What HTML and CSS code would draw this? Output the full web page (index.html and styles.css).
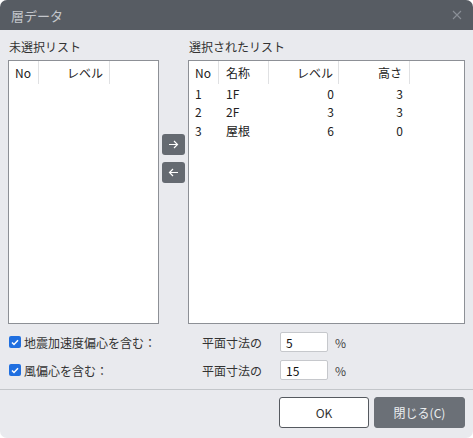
FILE: index.html
```html
<!DOCTYPE html>
<html lang="ja">
<head>
<meta charset="utf-8">
<link rel="stylesheet" href="styles.css">
</head>
<body>
<div class="window">
  <div class="titlebar">
    <span class="title">層データ</span>
    <svg class="close" width="10" height="10" viewBox="0 0 10 10"><path d="M1 1 L9 9 M9 1 L1 9" stroke="#8a8f96" stroke-width="1.1" fill="none"/></svg>
  </div>
  <div class="content">
    <div class="lists">
      <div class="panel left">
        <div class="plabel">未選択リスト</div>
        <div class="box">
          <div class="row head">
            <div class="c c-no">No</div>
            <div class="c c-lvl-l r">レベル</div>
          </div>
        </div>
      </div>
      <div class="mid">
        <button class="abtn"><svg width="11" height="9" viewBox="0 0 11 9"><path d="M1 4.5 H9.5 M6 1 L9.5 4.5 L6 8" stroke="#fff" stroke-width="1.2" fill="none"/></svg></button>
        <button class="abtn"><svg width="11" height="9" viewBox="0 0 11 9"><path d="M10 4.5 H1.5 M5 1 L1.5 4.5 L5 8" stroke="#fff" stroke-width="1.2" fill="none"/></svg></button>
      </div>
      <div class="panel right">
        <div class="plabel">選択されたリスト</div>
        <div class="box">
          <div class="row head">
            <div class="c c-no">No</div>
            <div class="c c-name">名称</div>
            <div class="c c-lvl r">レベル</div>
            <div class="c c-h r">高さ</div>
          </div>
          <div class="row data">
            <div class="c c-no">1</div>
            <div class="c c-name">1F</div>
            <div class="c c-lvl r">0</div>
            <div class="c c-h r">3</div>
          </div>
          <div class="row data">
            <div class="c c-no">2</div>
            <div class="c c-name">2F</div>
            <div class="c c-lvl r">3</div>
            <div class="c c-h r">3</div>
          </div>
          <div class="row data">
            <div class="c c-no">3</div>
            <div class="c c-name">屋根</div>
            <div class="c c-lvl r">6</div>
            <div class="c c-h r">0</div>
          </div>
        </div>
      </div>
    </div>
    <div class="opts">
      <div class="opt">
        <span class="cb"><svg width="8" height="7" viewBox="0 0 8 7"><path d="M1 3.5 L3 5.5 L7 1.2" stroke="#fff" stroke-width="1.5" fill="none"/></svg></span>
        <span class="olabel">地震加速度偏心を含む：</span>
        <span class="dim">平面寸法の</span>
        <span class="inp">5</span>
        <span class="pct">%</span>
      </div>
      <div class="opt">
        <span class="cb"><svg width="8" height="7" viewBox="0 0 8 7"><path d="M1 3.5 L3 5.5 L7 1.2" stroke="#fff" stroke-width="1.5" fill="none"/></svg></span>
        <span class="olabel">風偏心を含む：</span>
        <span class="dim">平面寸法の</span>
        <span class="inp">15</span>
        <span class="pct">%</span>
      </div>
    </div>
  </div>
  <div class="sep"></div>
  <div class="footer">
    <button class="btn ok">OK</button>
    <button class="btn close-btn">閉じる(C)</button>
  </div>
</div>
</body>
</html>
```
FILE: styles.css
```css
html, body {
  margin: 0;
  padding: 0;
  background: #ffffff;
}
body {
  font-family: "Noto Sans CJK JP", "Noto Sans", sans-serif;
  font-size: 12px;
  color: #333;
}
.window {
  width: 473px;
  height: 438px;
  background: #e9eaee;
  border-radius: 7px;
  overflow: hidden;
  display: flex;
  flex-direction: column;
}
.titlebar {
  height: 30px;
  flex: none;
  background: #575c63;
  display: flex;
  align-items: center;
  justify-content: space-between;
  padding: 0 11px 0 11px;
  box-sizing: border-box;
}
.title {
  color: #c3c6cb;
  font-size: 13px;
}
.close {
  display: block;
  margin-top: -1px;
}
.content {
  padding: 10px 8px 0 8px;
}
.lists {
  display: flex;
}
.panel {
  display: flex;
  flex-direction: column;
}
.panel.left { width: 151px; }
.panel.right { width: 277px; }
.plabel {
  height: 14px;
  line-height: 14px;
  margin-bottom: 6px;
  padding-left: 1px;
  color: #333;
}
.box {
  height: 262px;
  background: #fff;
  border: 1px solid #8d9096;
}
.mid {
  width: 29px;
  display: flex;
  flex-direction: column;
  align-items: center;
  padding-top: 94px;
  gap: 7px;
}
.abtn {
  width: 23px;
  height: 21px;
  border: none;
  border-radius: 3px;
  background: #656a71;
  padding: 0;
  display: flex;
  align-items: center;
  justify-content: center;
}
.row {
  display: flex;
}
.row.head {
  height: 23px;
  align-items: center;
}
.row.data {
  height: 18.5px;
  align-items: center;
  color: #222;
}
.row.data:first-of-type { }
.c {
  box-sizing: border-box;
  padding: 0 6px 0 7px;
  height: 100%;
  display: flex;
  align-items: center;
  white-space: nowrap;
}
.head .c {
  border-right: 1px solid #e0e1e3;
  color: #222;
}
.c.r { justify-content: flex-end; }
.c-no { width: 30px; padding-left: 6px; }
.left .c-no { width: 30px; }
.c-lvl-l { width: 71px; }
.c-name { width: 50px; }
.c-lvl { width: 70px; padding-right: 5px; }
.c-h { width: 71px; padding-right: 7px; }
.opts {
  display: flex;
  flex-direction: column;
  gap: 8px;
  margin-top: 8px;
}
.opt {
  height: 20px;
  display: flex;
  align-items: center;
}
.cb {
  width: 12px;
  height: 12px;
  border-radius: 2px;
  background: #1f6fe0;
  display: flex;
  align-items: center;
  justify-content: center;
  margin-left: 1px;
  flex: none;
}
.olabel {
  margin-left: 3px;
  width: 178px;
  color: #333;
}
.dim {
  width: 78px;
  color: #333;
}
.inp {
  width: 48px;
  height: 20px;
  box-sizing: border-box;
  border: 1px solid #c6c8cc;
  border-radius: 2px;
  background: #fff;
  padding-left: 5px;
  display: flex;
  align-items: center;
  color: #111;
}
.pct {
  margin-left: 7px;
  color: #444;
}
.sep {
  height: 1px;
  background: #c3c6ca;
  margin-top: 9px;
}
.footer {
  display: flex;
  justify-content: flex-end;
  gap: 5px;
  padding: 7px 8px 0 0;
}
.btn {
  width: 90px;
  height: 31px;
  border-radius: 3px;
  font-family: "Noto Sans CJK JP", "Noto Sans", sans-serif;
  font-size: 12px;
  padding: 0;
}
.btn.ok {
  background: #fff;
  border: 1px solid #55595f;
  color: #333;
}
.btn.close-btn {
  width: 91px;
  background: #6b7077;
  border: 1px solid #6b7077;
  color: #eceef0;
}
```
